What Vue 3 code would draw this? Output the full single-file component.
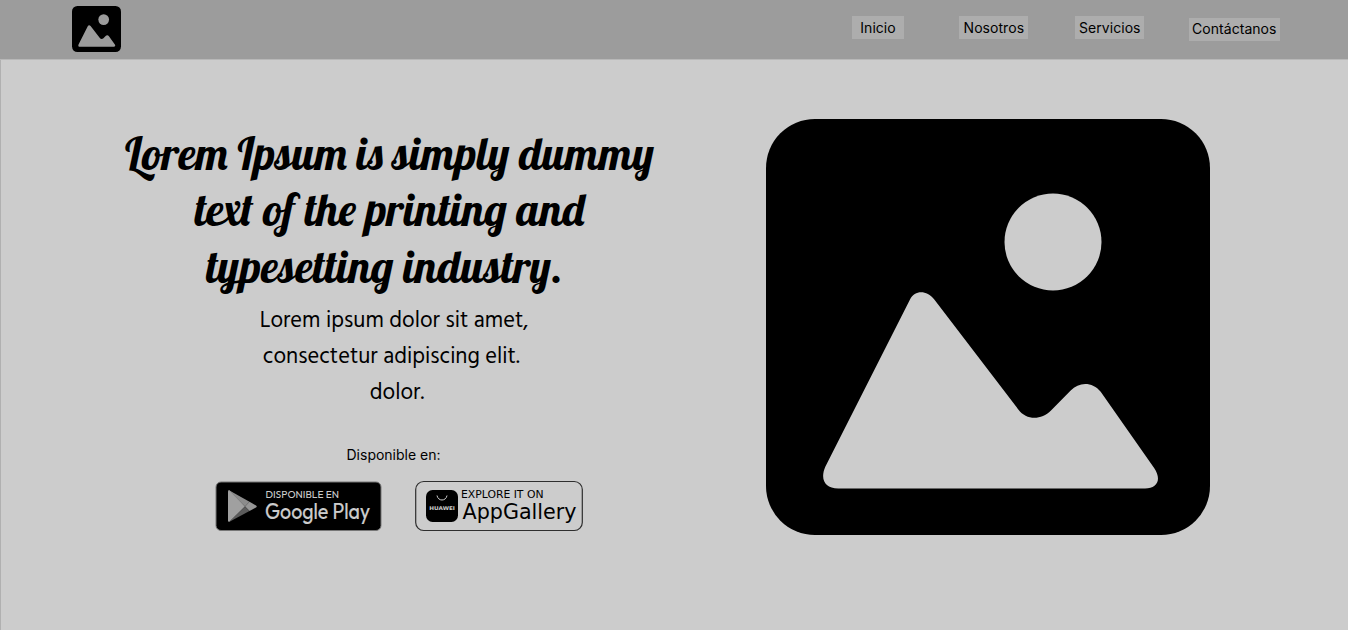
<script setup>
const links = [
  { label: 'Inicio', name: 'inicio' },
  { label: 'Nosotros', name: 'nosotros' },
  { label: 'Servicios', name: 'servicios' },
  { label: 'Contáctanos', name: 'contacto' },
]
const mountain =
  'M144 180.5C149 170.8 160.5 170.8 168.3 180.5L252.3 290.5C260.5 301.4 275 301.4 285 291.5L304.7 271.5C313 262.5 326.5 262.5 334.7 272.7L388.3 349.3C396 361 391 369.5 379 369.5H72.3C58.5 369.5 54 360 59.3 347.7Z'
</script>

<template>
  <div class="page">
    <header class="bar">
      <svg class="logo" viewBox="0 0 444 416" preserveAspectRatio="none">
        <rect width="444" height="416" rx="49" />
        <circle class="bar-hole" cx="287" cy="123" r="48.5" />
        <path class="bar-hole" :d="mountain" />
      </svg>
      <nav class="nav">
        <a v-for="l in links" :key="l.name" :class="['link', l.name]">{{ l.label }}</a>
      </nav>
    </header>

    <main class="hero">
      <section class="copy">
        <h1 class="title">Lorem Ipsum is simply dummy<br />text of the printing and<br />typesetting industry.&nbsp;</h1>
        <p class="lead">Lorem ipsum dolor sit amet,<br />consectetur adipiscing elit.&nbsp;<br /><span class="last">dolor.</span></p>
        <p class="available">Disponible en:</p>
        <div class="stores">
          <svg class="store" width="168" height="52" viewBox="214 480 168 52">
            <rect x="216" y="482" width="165" height="48.5" rx="5" fill="#000" stroke="#777" stroke-width="1" />
            <path d="M228 491.5Q228 489.7 229.8 490.5L245 506.5L229.5 521.7Q228 522.3 228 520.5Z" fill="#a0a0a0" />
            <path d="M229 490.2L249.5 501.8L245 506.5L228.6 490.3Z" fill="#8c8c8c" />
            <path d="M249.5 501.8L256 505.5Q257.5 506.5 256 507.5L249.5 511L245 506.5Z" fill="#969696" />
            <path d="M229 521.9L245 506.5L249.5 511Z" fill="#5c5c5c" />
            <text class="play-small" x="265.5" y="497.9" textLength="73.5" lengthAdjust="spacingAndGlyphs">DISPONIBLE EN</text>
            <text class="play-big" x="265" y="519.3" textLength="105" lengthAdjust="spacingAndGlyphs">Google Play</text>
          </svg>
          <svg class="store" width="170" height="52" viewBox="414 480 170 52">
            <rect x="415.7" y="481.5" width="166.6" height="49" rx="8" fill="none" stroke="#2e2e2e" stroke-width="1.2" />
            <rect x="426" y="490" width="32" height="32" rx="6.5" />
            <path d="M437 495.5C438 501.5 446 501.5 447 495.5" fill="none" stroke="#ccc" stroke-width="1" />
            <text class="huawei" x="429.3" y="510" textLength="25.7" lengthAdjust="spacingAndGlyphs">HUAWEI</text>
            <text class="gallery-small" x="461" y="498" textLength="82.5" lengthAdjust="spacingAndGlyphs">EXPLORE IT ON</text>
            <text class="gallery-big" x="462.5" y="518.5" textLength="114" lengthAdjust="spacingAndGlyphs">AppGallery</text>
          </svg>
        </div>
      </section>
      <svg class="picture" viewBox="0 0 444 416">
        <rect width="444" height="416" rx="49" ry="49" />
        <circle class="hole" cx="287" cy="123" r="48.5" />
        <path class="hole" :d="mountain" />
      </svg>
    </main>
  </div>
</template>

<style>
body { margin: 0; background: #ccc; }
</style>

<style scoped>
.page { width: 1348px; height: 630px; background: #ccc; overflow: hidden; color: #000; font-family: Inter, "Liberation Sans", sans-serif; }
.bar { box-sizing: border-box; height: 60px; background: #9c9c9c; border-bottom: 1px solid #b8b8b8; display: flex; justify-content: space-between; align-items: flex-start; padding: 6px 68px 0 72.4px; }
.logo { width: 49px; height: 46px; display: block; }
.bar-hole { fill: #9c9c9c; }
.nav { display: flex; padding-top: 10px; }
.link { height: 23px; line-height: 23px; background: #adadad; font-size: 14px; letter-spacing: 0.05px; text-align: center; white-space: nowrap; }
.inicio { width: 52px; margin-right: 55.3px; }
.nosotros { width: 69px; margin-right: 47px; }
.servicios { width: 69px; margin-right: 44.2px; }
.contacto { width: 91.5px; margin-top: 2px; line-height: 22px; }
.hero { box-sizing: border-box; height: 570px; border-left: 1px solid #b0b0b0; display: flex; align-items: flex-start; }
.copy { width: 560px; margin-left: 108.5px; padding-top: 65px; }
.title, .lead, .available { margin: 0; font-weight: normal; }
.title { height: 178px; font-family: Lobster, "Liberation Serif", serif; font-size: 45px; line-height: 56.25px; text-align: center; white-space: nowrap; }
.lead { width: 300px; height: 108px; margin-left: 134.5px; font-family: Hind, "Noto Sans", sans-serif; font-size: 22.5px; line-height: 36px; text-align: center; white-space: nowrap; }
.last { margin-left: 6px; }
.available { width: 94px; margin: 34px 0 0 237px; font-size: 14px; line-height: 20px; white-space: nowrap; }
.stores { display: flex; gap: 32px; margin: 15px 0 0 104.5px; }
.store { display: block; }
.play-small { fill: #ccc; font-family: "Product Sans", "Google Sans", Outfit, Lato, sans-serif; font-size: 10px; }
.play-big { fill: #ccc; font-family: "Product Sans", "Google Sans", Outfit, Lato, sans-serif; font-size: 21.5px; stroke: #ccc; stroke-width: 0.2px; }
.huawei { fill: #ccc; font-family: "DejaVu Sans", sans-serif; font-size: 5.2px; font-weight: 600; }
.gallery-small { font-family: "DejaVu Sans", sans-serif; font-size: 10.5px; }
.gallery-big { font-family: "DejaVu Sans", sans-serif; font-size: 21px; }
.picture { width: 444px; height: 416px; margin: 59px 0 0 96.5px; display: block; }
.hole { fill: #ccc; }
</style>
